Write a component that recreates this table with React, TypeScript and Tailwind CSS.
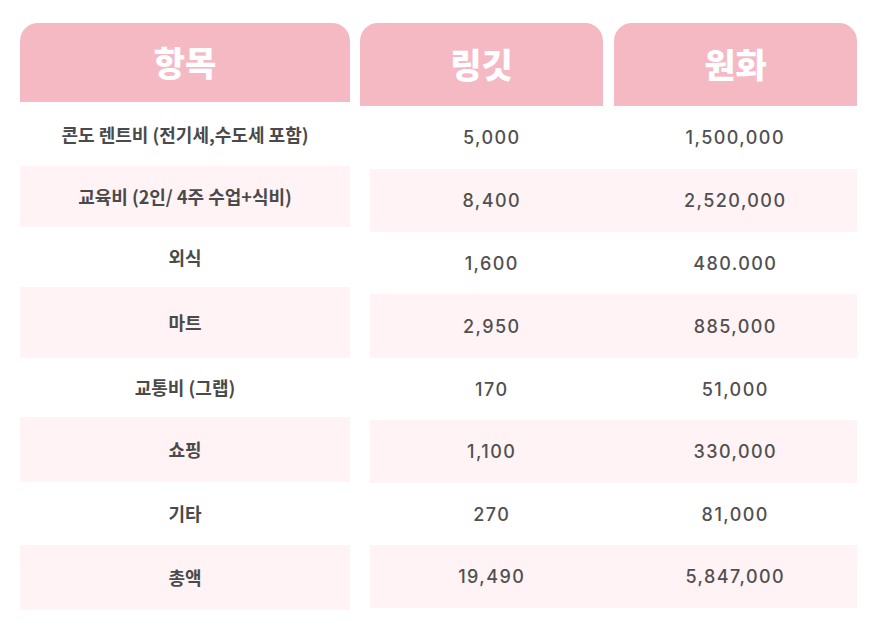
import React from "react";

const items = [
  "콘도 렌트비 (전기세,수도세 포함)",
  "교육비 (2인/ 4주 수업+식비)",
  "외식",
  "마트",
  "교통비 (그랩)",
  "쇼핑",
  "기타",
  "총액",
];
const leftH = [64, 61, 60, 71, 59, 65, 63, 65];
const rightH = [63, 63, 62, 64, 62, 63, 62, 63];
const rm = ["5,000", "8,400", "1,600", "2,950", "170", "1,100", "270", "19,490"];
const krw = ["1,500,000", "2,520,000", "480.000", "885,000", "51,000", "330,000", "81,000", "5,847,000"];

const kr = { fontFamily: '"Noto Sans CJK KR", "Noto Sans", sans-serif' };
const num = { fontFamily: 'Inter, "Noto Sans", sans-serif' };

export default function App() {
  return (
    <div className="w-[876px] h-[628px] bg-white flex pt-[23px] pl-[20px]">
      <div className="w-[330px] flex flex-col">
        <div
          className="h-[79px] rounded-t-[18px] bg-[#f5b9c4] flex items-center justify-center text-white text-[34px] font-black pb-[2px]"
          style={kr}
        >
          항목
        </div>
        {items.map((t, i) => (
          <div
            key={i}
            className={`flex items-center justify-center text-[18px] font-bold text-[#4a4a4a] ${i % 2 === 1 ? "bg-[#fff3f5]" : "bg-white"}`}
            style={{ ...kr, height: leftH[i] }}
          >
            {t}
          </div>
        ))}
      </div>
      <div className="flex flex-col ml-[10px]">
        <div className="flex gap-[11px]">
          <div
            className="w-[243px] h-[83px] rounded-t-[18px] bg-[#f5b9c4] flex items-center justify-center text-white text-[34px] font-black pb-[2px]"
            style={kr}
          >
            링깃
          </div>
          <div
            className="w-[243px] h-[83px] rounded-t-[18px] bg-[#f5b9c4] flex items-center justify-center text-white text-[34px] font-black pb-[2px]"
            style={kr}
          >
            원화
          </div>
        </div>
        <div className="ml-[10px] w-[487px] flex flex-col">
          {rm.map((v, i) => (
            <div
              key={i}
              className={`grid grid-cols-2 text-[18px] font-medium text-[#505050] tracking-[0.08em] ${i % 2 === 1 ? "bg-[#fff3f5]" : "bg-white"}`}
              style={{ ...num, height: rightH[i] }}
            >
              <div className="flex items-center justify-center">{v}</div>
              <div className="flex items-center justify-center">{krw[i]}</div>
            </div>
          ))}
        </div>
      </div>
    </div>
  );
}
